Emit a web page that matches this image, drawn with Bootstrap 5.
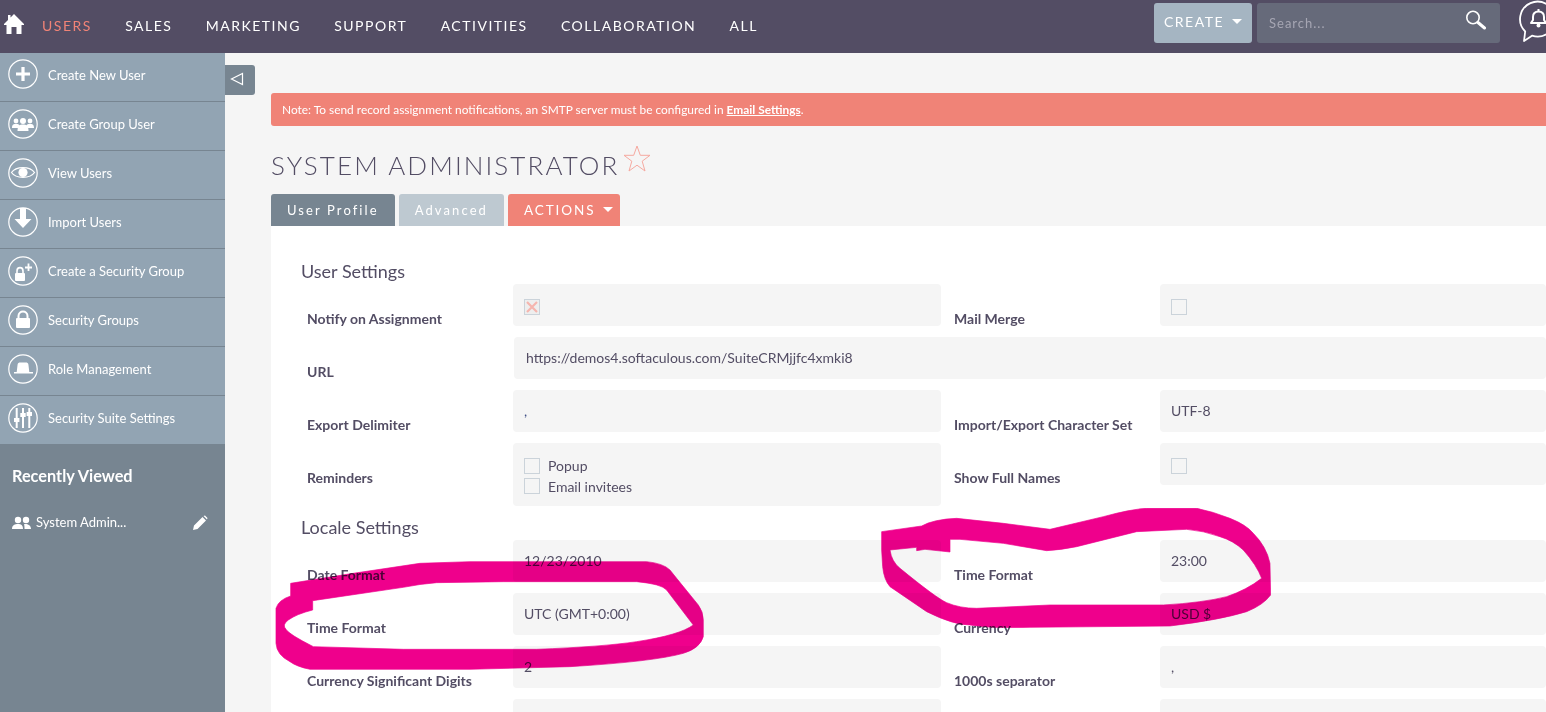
<!DOCTYPE html>
<html lang="en">
<head>
    <meta charset="UTF-8">
    <meta name="viewport" content="width=device-width, initial-scale=1.0">
    <title>SuiteCRM - System Administrator</title>
    <link href="https://cdn.jsdelivr.net/npm/bootstrap@5.3.0/dist/css/bootstrap.min.css" rel="stylesheet">
    <style>
        html, body { height: 712px; overflow: hidden; }
        body { font-family: Lato, "Liberation Sans", sans-serif; font-size: 14px; color: #534d64; background: #f5f5f5; position: relative; }
        .top-bar { background: #534d64; height: 53px; padding: 0; flex-wrap: nowrap; }
        .home-link { width: 42px; padding-left: 3px; margin-top: -5px; display: block; line-height: 0; }
        .top-bar .nav-link { color: #fff; font-size: 14px; letter-spacing: 1.5px; text-transform: uppercase; padding: 0; margin-right: 33.3px; margin-top: -3px; }
        .top-bar .nav-link.active { color: #f08377; }
        .create-btn { background: #a5b5c2; color: #fff; width: 98px; height: 40px; font-size: 14px; letter-spacing: 1.5px; border: 0; border-radius: 3px; padding: 0 0 4px 10px; margin-top: -7px; text-align: left; }
        .create-btn:hover { background: #a5b5c2; color: #fff; }
        .caret-down { display: inline-block; border-top: 5px solid #fff; border-left: 5px solid transparent; border-right: 5px solid transparent; vertical-align: 3px; margin-left: 3px; }
        .search-box { background: #666a7a; width: 243px; height: 40px; margin-left: 5px; margin-top: -7px; border-radius: 3px; padding: 2px 12px 0; }
        .search-box span { color: #a6a6b3; font-size: 13px; letter-spacing: 1px; }
        .search-box svg { margin-top: -8px; margin-right: 1px; }
        .bell-wrap { margin-left: 19px; margin-top: -11px; line-height: 0; }
        .page-wrap { height: 659px; }
        .side-col { width: 225px; flex: none; background: #778591; }
        .side-col .list-group-item { background: #92a4b3; color: #fff; border: 0; border-bottom: 1px solid #778591; border-radius: 0; height: 49px; padding: 0 0 2px 8px; font-size: 13px; display: flex; align-items: center; gap: 10px; }
        .side-col .list-group-item svg { margin-top: -3px; }
        .side-col .list-group-item:first-child svg { margin-top: -5px; }
        .side-col .list-group-item:last-child { border-bottom: 0; height: 48px; }
        .recent-title { color: #fff; font-size: 16.3px; font-weight: 700; margin: 22px 0 0 12px; line-height: 20px; }
        .recent-row { color: #fff; font-size: 13px; margin: 27px 17px 0 12px; }
        .toggle-btn { position: absolute; left: 225px; top: 65px; width: 30px; height: 30px; background: #778591; border-radius: 0 3px 3px 0; display: flex; align-items: center; justify-content: center; padding: 0 7px 2px 0; }
        .main-col { flex: 1; min-width: 0; padding: 40px 0 0 46px; }
        .note-bar { background: #f08377; color: #fff; font-size: 11.9px; height: 33px; margin: 0; padding: 0 11px; border: 0; border-radius: 3px 0 0 3px; display: flex; align-items: center; }
        .note-bar a { color: #fff; font-weight: 700; }
        .page-title { font-size: 26px; font-weight: 300; letter-spacing: 2.1px; margin: 0; line-height: 32px; color: #534d64; }
        .title-row { margin-top: 23px; height: 45px; }
        .title-row svg { margin-left: 4px; margin-top: -4px; }
        .tab-btn { color: #fff; height: 32px; font-size: 13px; letter-spacing: 2.1px; border: 0; border-radius: 3px 3px 0 0; padding: 1px 16px 0; }
        .tab-btn:hover, .tab-btn:disabled { color: #fff; opacity: 1; }
        .tab-one, .tab-one:hover { background: #778591; }
        .tab-two, .tab-two:disabled { background: #bec9d1; }
        .tab-three, .tab-three:hover { background: #f08377; font-size: 13.5px; letter-spacing: 1.9px; padding: 0 8px 0 16px; width: 112px; text-align: left; white-space: nowrap; }
        .tab-three .caret-down { margin-left: 2px; }
        .form-panel { background: #fff; padding: 33px 0 0 30px; height: 500px; }
        .section-head { font-size: 18px; font-weight: 400; line-height: 24px; margin: 0 0 1px; color: #534d64; }
        .section-head.second { margin-top: 9px; }
        .field-grid { display: grid; grid-template-columns: 212px 428px 219px 1fr; row-gap: 11px; }
        .field-label { font-weight: 700; font-size: 14px; padding-left: 6px; align-self: start; line-height: 17px; margin-top: 26px; margin-bottom: -1px; }
        .field-label.right-side { padding-left: 13px; }
        .field-box { background: #f5f5f5; height: 42px; border-radius: 4px; padding: 0 11px 2px; display: flex; align-items: center; }
        .field-box.wide { grid-column: span 3; margin-left: 1px; padding-left: 12px; }
        .field-box.stacked { display: block; padding-top: 12px; height: 63px; }
        .tick-box { width: 16px; height: 16px; background: #fff; border: 1px solid #cbd3da; display: inline-block; flex: none; }
        .tick-box.off { background: #f5f5f5; }
        .tick-low { margin-top: 6px; }
        .tick-x { background: #eee; line-height: 0; }
        .stack-row { display: flex; align-items: center; gap: 8px; line-height: 21px; height: 21px; }
        .stack-row + .stack-row .tick-box { margin-top: -2px; }
        .blue-comma { color: #3f4f86; }
        .scribble { position: absolute; left: 0; top: 0; width: 1546px; height: 712px; mix-blend-mode: multiply; pointer-events: none; }
    </style>
</head>
<body>
    <nav class="navbar top-bar d-flex align-items-center">
        <a class="home-link" href="#">
            <svg width="22" height="22" viewBox="0 0 22 22"><path d="M11 1 L21 11 L21 12 L18.5 12 L18.5 21 L13.5 21 L13.5 14 L8.5 14 L8.5 21 L3.5 21 L3.5 12 L1 12 L1 11 L5 7 L5 2 L7.5 2 L7.5 4.5 Z" fill="#fff"/></svg>
        </a>
        <div class="navbar-nav flex-row flex-grow-1">
            <a class="nav-link active" href="#">Users</a>
            <a class="nav-link" href="#">Sales</a>
            <a class="nav-link" href="#">Marketing</a>
            <a class="nav-link" href="#">Support</a>
            <a class="nav-link" href="#">Activities</a>
            <a class="nav-link" href="#">Collaboration</a>
            <a class="nav-link" href="#">All</a>
        </div>
        <button class="btn create-btn" type="button">CREATE <i class="caret-down"></i></button>
        <div class="search-box d-flex align-items-center justify-content-between">
            <span>Search...</span>
            <svg width="22" height="20" viewBox="0 0 22 20" fill="none" stroke="#fff"><circle cx="8" cy="7.5" r="6.2" stroke-width="1.6"/><path d="M13 12.5 L19.5 18" stroke-width="3" stroke-linecap="round"/></svg>
        </div>
        <div class="bell-wrap">
            <svg width="27" height="42" viewBox="0 0 27 42"><path d="M13 35.7 L5 41 L6.2 31.5 A17.5 17.5 0 1 1 13 35.7 Z" fill="none" stroke="#fff" stroke-width="1.8" stroke-linejoin="round"/><path d="M19.5 11.500 C23.500 11.500 25 14 25 17 L25 20 L27 23 L12 23 L14 20 L14 17 C14 14 15.500 11.500 19.500 11.500 Z" fill="none" stroke="#fff" stroke-width="2" stroke-linejoin="round"/><circle cx="19.500" cy="25.500" r="2" fill="#fff"/><rect x="18.500" y="9" width="2" height="3" fill="#fff"/></svg>
        </div>
    </nav>

    <div class="page-wrap d-flex">
        <aside class="side-col">
            <div class="list-group list-group-flush">
                <a href="#" class="list-group-item">
                    <svg width="30" height="30" viewBox="0 0 30 30" fill="none" stroke="#fff"><circle cx="15" cy="15" r="14.2" stroke-width="1.2"/><path d="M15 8 V22 M8 15 H22" stroke-width="3.2"/></svg>
                    Create New User
                </a>
                <a href="#" class="list-group-item">
                    <svg width="30" height="30" viewBox="0 0 30 30" fill="none" stroke="#fff"><circle cx="15" cy="15" r="14.2" stroke-width="1.2"/><g fill="#fff" stroke="none"><circle cx="8" cy="12" r="2.4"/><circle cx="22" cy="12" r="2.4"/><path d="M4 19 C4 15 6 15 8 15 C10 15 12 15 12 19 Z M18 19 C18 15 20 15 22 15 C24 15 26 15 26 19 Z"/><circle cx="15" cy="12" r="3"/><path d="M9.5 22 C9.5 16 12 15.5 15 15.5 C18 15.5 20.5 16 20.5 22 Z"/></g></svg>
                    Create Group User
                </a>
                <a href="#" class="list-group-item">
                    <svg width="30" height="30" viewBox="0 0 30 30" fill="none" stroke="#fff"><circle cx="15" cy="15" r="14.2" stroke-width="1.2"/><path d="M3.5 14.5 C8 8 22 8 26.5 14.5 C22 21 8 21 3.5 14.5 Z" stroke-width="1.3"/><circle cx="15" cy="14.5" r="4.6" fill="#fff" stroke="none"/></svg>
                    View Users
                </a>
                <a href="#" class="list-group-item">
                    <svg width="30" height="30" viewBox="0 0 30 30" fill="none" stroke="#fff"><circle cx="15" cy="15" r="14.2" stroke-width="1.2"/><path d="M12 1 H18 V12 H23.500 L15 21 L6.500 12 H12 Z" fill="#fff" stroke="none"/></svg>
                    Import Users
                </a>
                <a href="#" class="list-group-item">
                    <svg width="30" height="30" viewBox="0 0 30 30" fill="none" stroke="#fff"><circle cx="15" cy="15" r="14.2" stroke-width="1.2"/><path d="M9 17 V15 C9 10.5 15 10.5 15 15 V17" stroke-width="1.6"/><rect x="7" y="17" width="10" height="8" rx="1" fill="#fff" stroke="none"/><path d="M20.500 7.500 V15 M17 11.500 H24" stroke-width="1.8"/></svg>
                    Create a Security Group
                </a>
                <a href="#" class="list-group-item">
                    <svg width="30" height="30" viewBox="0 0 30 30" fill="none" stroke="#fff"><circle cx="15" cy="15" r="14.2" stroke-width="1.2"/><path d="M10.500 14 V11 C10.500 5 19.500 5 19.500 11 V14" stroke-width="2"/><rect x="8" y="13" width="14" height="10" rx="1" fill="#fff" stroke="none"/></svg>
                    Security Groups
                </a>
                <a href="#" class="list-group-item">
                    <svg width="30" height="30" viewBox="0 0 30 30" fill="none" stroke="#fff"><circle cx="15" cy="15" r="14.2" stroke-width="1.2"/><path d="M8.700 18 L9.600 10.500 C9.800 9 11 8.500 12 8.500 H18 C19 8.500 20.200 9 20.400 10.500 L21.300 18 H25 V19.500 H6 V18 Z" fill="#fff" stroke="none"/></svg>
                    Role Management
                </a>
                <a href="#" class="list-group-item">
                    <svg width="30" height="30" viewBox="0 0 30 30" fill="none" stroke="#fff"><circle cx="15" cy="15" r="14.2" stroke-width="1.2"/><path d="M8.700 5 V25 M15 5 V25 M21.300 5 V25" stroke-width="2"/><path d="M6 15 H11.400 V19 H6 Z M12.300 10 H17.700 V14 H12.300 Z M18.600 9 H24 V13 H18.600 Z" fill="#fff" stroke="none"/></svg>
                    Security Suite Settings
                </a>
            </div>
            <h3 class="recent-title">Recently Viewed</h3>
            <div class="recent-row d-flex align-items-center">
                <svg class="me-1" width="20" height="14" viewBox="0 0 20 14" fill="#fff"><circle cx="6" cy="4" r="3.2"/><circle cx="14" cy="4" r="3.2"/><path d="M0 13 C0 9 3 8 6 8 C9 8 11 9 11 13 Z M12 8.2 C15 7.6 19 9 19 13 H12.5 C12.5 11 12.5 9.5 12 8.2 Z"/></svg>
                <span class="flex-grow-1">System Admin...</span>
                <svg width="16" height="16" viewBox="0 0 16 16" fill="#fff"><path d="M1 15 L2 10.5 L10.5 2 L14 5.5 L5.5 14 Z M11.5 1 L13 0.5 L15.5 3 L15 4.5 Z"/></svg>
            </div>
        </aside>
        <div class="toggle-btn">
            <svg width="14" height="14" viewBox="0 0 14 14" fill="none" stroke="#fff" stroke-width="1.2"><path d="M12.5 1.5 V12.5 L1.5 7 Z"/></svg>
        </div>

        <main class="main-col">
            <div class="alert note-bar" role="alert">
                <span>Note: To send record assignment notifications, an SMTP server must be configured in <a href="#">Email Settings</a>.</span>
            </div>
            <div class="title-row d-flex align-items-start">
                <h1 class="page-title">SYSTEM ADMINISTRATOR</h1>
                <svg width="28" height="27" viewBox="0 0 28 27" fill="none" stroke="#f5a9a0" stroke-width="1"><path d="M14 1 L17.3 10.3 L27 10.3 L19.2 16.2 L22 26 L14 20.2 L6 26 L8.8 16.2 L1 10.3 L10.7 10.3 Z"/></svg>
            </div>
            <div class="d-flex gap-1">
                <button class="btn tab-btn tab-one" type="button">User Profile</button>
                <button class="btn tab-btn tab-two" type="button" disabled>Advanced</button>
                <button class="btn tab-btn tab-three" type="button">ACTIONS <i class="caret-down"></i></button>
            </div>
            <section class="form-panel">
                <h4 class="section-head">User Settings</h4>
                <div class="field-grid">
                    <div class="field-label">Notify on Assignment</div>
                    <div class="field-box"><span class="tick-box tick-x tick-low"><svg width="14" height="14" viewBox="0 0 14 14" stroke="#f5b5ae" stroke-width="2.2"><path d="M2 2 L12 12 M12 2 L2 12"/></svg></span></div>
                    <div class="field-label right-side">Mail Merge</div>
                    <div class="field-box"><span class="tick-box off tick-low"></span></div>

                    <div class="field-label">URL</div>
                    <div class="field-box wide">https://demos4.softaculous.com/SuiteCRMjjfc4xmki8</div>

                    <div class="field-label">Export Delimiter</div>
                    <div class="field-box blue-comma">,</div>
                    <div class="field-label right-side">Import/Export Character Set</div>
                    <div class="field-box">UTF-8</div>

                    <div class="field-label">Reminders</div>
                    <div class="field-box stacked">
                        <div class="stack-row"><span class="tick-box off"></span>Popup</div>
                        <div class="stack-row"><span class="tick-box off"></span>Email invitees</div>
                    </div>
                    <div class="field-label right-side">Show Full Names</div>
                    <div class="field-box"><span class="tick-box off tick-low"></span></div>
                </div>

                <h4 class="section-head second">Locale Settings</h4>
                <div class="field-grid">
                    <div class="field-label">Date Format</div>
                    <div class="field-box">12/23/2010</div>
                    <div class="field-label right-side">Time Format</div>
                    <div class="field-box">23:00</div>

                    <div class="field-label">Time Format</div>
                    <div class="field-box">UTC (GMT+0:00)</div>
                    <div class="field-label right-side">Currency</div>
                    <div class="field-box">USD $</div>

                    <div class="field-label">Currency Significant Digits</div>
                    <div class="field-box">2</div>
                    <div class="field-label right-side">1000s separator</div>
                    <div class="field-box">,</div>

                    <div class="field-label"></div>
                    <div class="field-box"></div>
                    <div class="field-label right-side"></div>
                    <div class="field-box"></div>
                </div>
            </section>
        </main>
    </div>

    <svg class="scribble" viewBox="0 0 1546 712">
        <g fill="#ef008c" fill-rule="evenodd" stroke="#ef008c" stroke-width="2" stroke-linejoin="round">
            <path transform="translate(270 510) scale(0.3333)" d="M62 220 L250 190 L450 160 L600 155 L1130 155 Q1180 160 1200 180 L1220 205 L1285 285 Q1300 305 1300 330 L1300 380 Q1290 415 1240 430 Q1150 455 900 470 L600 478 L120 478 Q80 470 60 455 Q20 435 18 400 L18 295 Q25 270 62 258 Z M128 272 L128 300 Q80 312 55 330 Q35 345 48 358 Q55 372 130 410 L400 418 L800 418 Q1000 410 1100 395 Q1230 375 1270 345 L1190 240 Q1175 222 1100 215 L700 215 L500 218 Q450 222 400 232 Z"/>
            <path transform="translate(870 500) scale(0.3333)" d="M35 95 L155 78 Q190 58 260 55 L400 70 L540 88 L700 50 Q780 28 830 25 L980 25 Q1030 35 1080 55 Q1130 75 1150 100 Q1190 140 1200 190 L1202 285 Q1180 315 1130 335 Q1050 360 900 378 L480 382 Q350 385 300 375 Q250 375 170 335 L60 260 Q42 240 38 200 L35 150 Z M60 150 L140 142 L140 152 L165 148 L240 156 L240 118 L270 118 L400 130 L530 152 Q570 150 620 140 L800 95 L950 88 Q1000 92 1050 110 Q1090 122 1120 150 Q1160 195 1175 235 Q1130 270 1070 290 Q1000 308 880 315 L540 315 L320 325 Q270 325 230 308 Q200 295 90 205 Q65 185 60 150 Z"/>
        </g>
    </svg>

    <script src="https://cdn.jsdelivr.net/npm/bootstrap@5.3.0/dist/js/bootstrap.bundle.min.js"></script>
</body>
</html>
